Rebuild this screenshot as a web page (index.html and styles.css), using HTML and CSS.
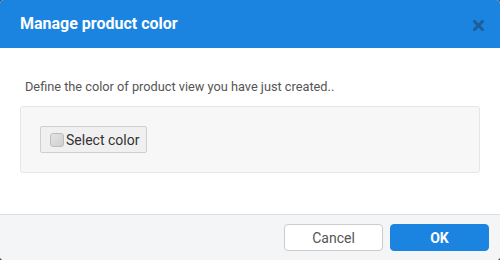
FILE: index.html
```html
<!DOCTYPE html>
<html>
<head>
<meta charset="utf-8">
<link rel="stylesheet" href="styles.css">
</head>
<body>
<div class="dialog">
  <div class="header">
    <span class="title">Manage product color</span>
    <span class="close"><svg width="11" height="11" viewBox="0 0 11 11"><path d="M1.5 1.5 L9.5 9.5 M9.5 1.5 L1.5 9.5" stroke="#1f5d98" stroke-width="3" stroke-linecap="square"/></svg></span>
  </div>
  <div class="content">
    <p class="lead">Define the color of product view you have just created..</p>
    <div class="panel">
      <button class="pick"><span class="swatch"></span>Select color</button>
    </div>
  </div>
  <div class="footer">
    <button class="btn cancel">Cancel</button>
    <button class="btn ok">OK</button>
  </div>
</div>
</body>
</html>
```
FILE: styles.css
```css
html, body {
  margin: 0;
  padding: 0;
  background: #4a4a4a;
}
body {
  font-family: Roboto, "Liberation Sans", sans-serif;
}
.dialog {
  width: 500px;
  height: 260px;
  background: #fff;
  border-radius: 4px;
  overflow: hidden;
  display: flex;
  flex-direction: column;
}
.header {
  height: 48px;
  flex: none;
  background: #1a84e0;
  display: flex;
  align-items: center;
  justify-content: space-between;
  padding: 0 16px 0 20px;
}
.title {
  color: #fff;
  font-weight: bold;
  font-size: 16px;
  padding-bottom: 1px;
}
.close {
  display: flex;
  padding-top: 2px;
}
.content {
  flex: 1;
  padding: 0 20px;
}
.lead {
  margin: 30px 0 10px 5px;
  font-size: 12.75px;
  line-height: 18px;
  color: #555;
}
.panel {
  background: #f7f7f7;
  border: 1px solid #e6e6e6;
  border-radius: 3px;
  padding: 19px;
  height: 27px;
}
.pick {
  height: 27px;
  width: 107px;
  display: flex;
  align-items: center;
  padding: 0 0 0 9px;
  margin: 0;
  background: #f0f0f0;
  border: 1px solid #cfcfcf;
  border-radius: 2px;
  font-family: Roboto, "Liberation Sans", sans-serif;
  font-size: 14px;
  color: #333;
}
.swatch {
  width: 12px;
  height: 12px;
  border: 1px solid #bdbdbd;
  border-radius: 3px;
  background: linear-gradient(135deg, #e4e4e4, #cfcfcf);
  margin-right: 2px;
}
.footer {
  flex: none;
  border-top: 1px solid #dedede;
  background: #f4f5f7;
  display: flex;
  justify-content: flex-end;
  align-items: flex-start;
  gap: 7px;
  padding: 9px 11px 0 0;
  box-sizing: border-box;
  height: 46px;
}
.btn {
  width: 99px;
  height: 27px;
  margin: 0;
  border-radius: 4px;
  font-family: Roboto, "Liberation Sans", sans-serif;
  font-size: 14px;
}
.cancel {
  background: #fff;
  border: 1px solid #cccccc;
  color: #555;
}
.ok {
  background: #1a84e0;
  border: 1px solid #1a84e0;
  color: #fff;
  font-weight: bold;
}
```
